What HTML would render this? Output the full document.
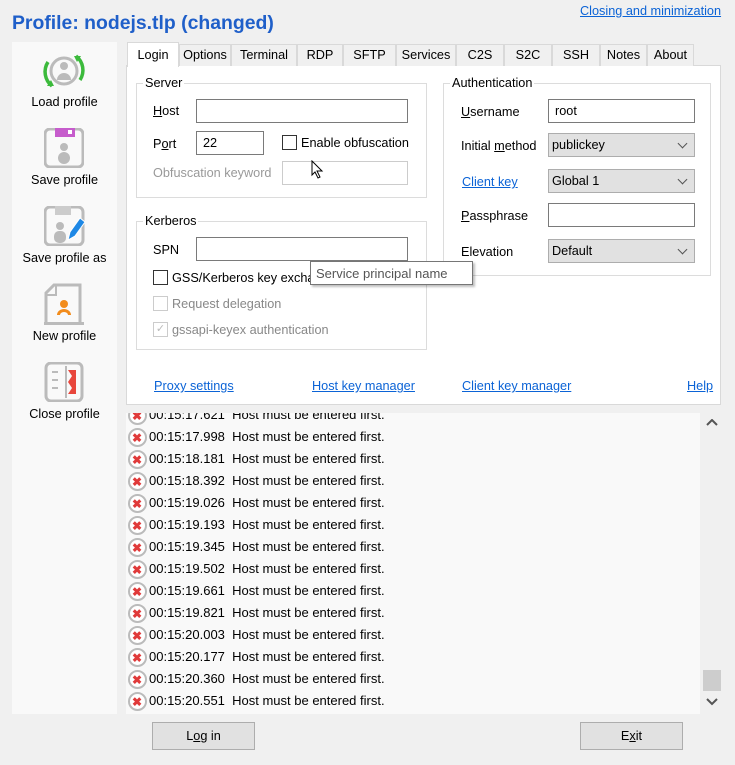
<!DOCTYPE html>
<html><head><meta charset="utf-8"><style>
*{box-sizing:border-box}
body{margin:0;width:735px;height:765px;background:#f0f0f0;font-family:"Liberation Sans",sans-serif;font-size:12.7px;color:#000;position:relative;overflow:hidden}
.a{position:absolute;white-space:nowrap}
.lnk{color:#0b63d6;text-decoration:underline}
.inp{position:absolute;background:#fff;border:1px solid #7a7a7a;height:24px;padding:4px 6px}
.dis{position:absolute;background:#fff;border:1px solid #ccc;height:24px}
.sel{position:absolute;background:#e1e1e1;border:1px solid #adadad;height:24px;padding:4px 3px}
.sel:after{content:"";position:absolute;right:8px;top:6px;width:6px;height:6px;border-right:1px solid #555;border-bottom:1px solid #555;transform:rotate(45deg)}
.grp{position:absolute;border:1px solid #dcdcdc}
.grp span{position:absolute;top:-8px;left:6px;background:#fff;padding:0 2px}
.cb{position:absolute;width:15px;height:15px;border:1px solid #333;background:#fff}
.tab{position:absolute;top:44px;height:22px;border:1px solid #d9d9d9;border-bottom:none;background:#f0f0f0;text-align:center;line-height:21px}
.row{position:absolute;left:128px;height:22px;line-height:22px;font-size:13px}
.ic{position:absolute;left:0;top:2px;width:19px;height:19px;border-radius:50%;border:2px solid #bbb;background:#fff}
.ic:before{content:"✖";position:absolute;left:2px;top:-3px;font-size:12px;color:#e03a3a;font-weight:bold}
.btn{position:absolute;top:722px;width:103px;height:28px;background:#e1e1e1;border:1px solid #adadad;text-align:center;line-height:26px}
.side{position:absolute;left:12px;width:105px;text-align:center}
</style></head><body>
<div class="a" style="left:12px;top:12px;font-size:19.4px;font-weight:bold;color:#1f5fc9">Profile: nodejs.tlp (changed)</div>
<div class="a lnk" style="left:580px;top:4px;font-size:12.7px">Closing and minimization</div>

<div class="a" style="left:12px;top:42px;width:105px;height:672px;background:#f9f9f9"></div>
<svg class="a" style="left:40px;top:52px" width="48" height="40" viewBox="0 0 48 40"><circle cx="24" cy="19" r="13" fill="none" stroke="#bbb" stroke-width="3"/><circle cx="24" cy="14" r="4" fill="#bbb"/><path d="M17 28 a7 7 0 0 1 14 0z" fill="#bbb"/><path d="M8 10 a18 18 0 0 0 4 24" fill="none" stroke="#3cba3c" stroke-width="3.5"/><path d="M40 28 a18 18 0 0 0 -4 -24" fill="none" stroke="#3cba3c" stroke-width="3.5"/><path d="M7 34 l7 0 l-3 -6z M41 4 l-7 0 l3 6z" fill="#3cba3c"/></svg>
<div class="side" style="top:95px">Load profile</div>
<svg class="a" style="left:44px;top:128px" width="40" height="40"><rect x="1" y="1" width="38" height="38" rx="5" fill="none" stroke="#bbb" stroke-width="3"/><rect x="11" y="0" width="20" height="9" fill="#c65ccc"/><rect x="24" y="2" width="4" height="4" fill="#fff"/><circle cx="20" cy="19" r="4" fill="#bbb"/><rect x="14" y="24" width="12" height="12" rx="6" fill="#bbb"/></svg>
<div class="side" style="top:173px">Save profile</div>
<svg class="a" style="left:44px;top:206px" width="42" height="40"><rect x="1" y="1" width="38" height="38" rx="5" fill="none" stroke="#bbb" stroke-width="3"/><rect x="11" y="0" width="16" height="9" fill="#ccc"/><circle cx="16" cy="20" r="4" fill="#bbb"/><rect x="10" y="25" width="12" height="12" rx="5" fill="#bbb"/><path d="M24 34 l2 -8 l10 -14 l5 4 l-10 14z" fill="#1e88e5" stroke="#fff"/></svg>
<div class="side" style="top:251px">Save profile as</div>
<svg class="a" style="left:44px;top:283px" width="40" height="42"><path d="M2 40 V10 L10 2 H36 V40" fill="none" stroke="#bbb" stroke-width="3"/><path d="M2 12 H12 V2" fill="none" stroke="#bbb" stroke-width="2"/><circle cx="20" cy="21" r="4" fill="#f28c1c"/><path d="M13 32 a7 6 0 0 1 14 0 h-3 a4 3 0 0 0 -8 0z" fill="#f28c1c"/><rect x="0" y="39" width="40" height="3" fill="#bbb"/></svg>
<div class="side" style="top:329px">New profile</div>
<svg class="a" style="left:44px;top:362px" width="40" height="40"><rect x="2" y="1" width="36" height="38" rx="5" fill="none" stroke="#bbb" stroke-width="3"/><path d="M8 10h6M8 18h6M8 26h6" stroke="#bbb" stroke-width="2"/><path d="M22 4 v32" stroke="#bbb" stroke-width="2"/><path d="M24 8 h8 v24 h-8 l4 -6 l-4 -6 l4 -6z" fill="#e8463c"/></svg>
<div class="side" style="top:407px">Close profile</div>

<div class="a" style="left:126px;top:65px;width:595px;height:340px;background:#fff;border:1px solid #d9d9d9"></div>
<div class="tab" style="left:179px;width:52px">Options</div>
<div class="tab" style="left:231px;width:66px">Terminal</div>
<div class="tab" style="left:297px;width:46px">RDP</div>
<div class="tab" style="left:343px;width:53px">SFTP</div>
<div class="tab" style="left:396px;width:60px">Services</div>
<div class="tab" style="left:456px;width:48px">C2S</div>
<div class="tab" style="left:504px;width:48px">S2C</div>
<div class="tab" style="left:552px;width:48px">SSH</div>
<div class="tab" style="left:600px;width:47px">Notes</div>
<div class="tab" style="left:647px;width:47px">About</div>
<div class="tab" style="left:127px;top:42px;width:52px;height:25px;background:#fff;line-height:24px">Login</div>

<div class="grp" style="left:136px;top:83px;width:291px;height:115px"><span>Server</span></div>
<div class="a" style="left:153px;top:104px"><u>H</u>ost</div>
<div class="inp" style="left:196px;top:99px;width:212px"></div>
<div class="a" style="left:153px;top:137px">P<u>o</u>rt</div>
<div class="inp" style="left:196px;top:131px;width:68px">22</div>
<div class="cb" style="left:282px;top:135px"></div>
<div class="a" style="left:301px;top:136px">Enable obfuscation</div>
<div class="a" style="left:153px;top:166px;color:#999">Obfuscation keyword</div>
<div class="dis" style="left:282px;top:161px;width:126px"></div>
<svg class="a" style="left:311px;top:160px" width="14" height="20"><path d="M1 1 L1 15 L4 12 L7 18 L9 17 L6 11 L11 11Z" fill="#fff" stroke="#000"/></svg>

<div class="grp" style="left:136px;top:221px;width:291px;height:129px"><span>Kerberos</span></div>
<div class="a" style="left:153px;top:243px">SPN</div>
<div class="inp" style="left:196px;top:237px;width:212px"></div>
<div class="cb" style="left:153px;top:270px"></div>
<div class="a" style="left:172px;top:271px">GSS/Kerberos key excha</div>
<div class="cb" style="left:153px;top:296px;border-color:#ccc"></div>
<div class="a" style="left:172px;top:297px;color:#888">Request delegation</div>
<div class="cb" style="left:153px;top:322px;border-color:#ccc;color:#bbb;font-size:11px;line-height:13px;text-align:center">✓</div>
<div class="a" style="left:172px;top:323px;color:#888">gssapi-keyex authentication</div>

<div class="grp" style="left:443px;top:83px;width:268px;height:193px"><span>Authentication</span></div>
<div class="a" style="left:461px;top:105px"><u>U</u>sername</div>
<div class="inp" style="left:548px;top:99px;width:147px">root</div>
<div class="a" style="left:461px;top:139px">Initial <u>m</u>ethod</div>
<div class="sel" style="left:548px;top:133px;width:147px">publickey</div>
<div class="a lnk" style="left:462px;top:175px">Client key</div>
<div class="sel" style="left:548px;top:169px;width:147px">Global 1</div>
<div class="a" style="left:461px;top:209px"><u>P</u>assphrase</div>
<div class="inp" style="left:548px;top:203px;width:147px"></div>
<div class="a" style="left:461px;top:245px">Elevation</div>
<div class="sel" style="left:548px;top:239px;width:147px">Default</div>

<div class="a" style="left:310px;top:261px;width:163px;height:24px;background:#fff;border:1px solid #767676;box-shadow:2px 2px 2px rgba(0,0,0,.25);padding:4px 5px;color:#555;font-size:13px">Service principal name</div>

<div class="a lnk" style="left:154px;top:379px">Proxy settings</div>
<div class="a lnk" style="left:312px;top:379px">Host key manager</div>
<div class="a lnk" style="left:462px;top:379px">Client key manager</div>
<div class="a lnk" style="left:687px;top:379px">Help</div>

<div class="a" style="left:126px;top:413px;width:596px;height:301px;background:#f9f9f9;overflow:hidden">
<div style="position:absolute;left:-126px;top:-413px;width:735px;height:765px">
<div class="row" style="top:404px"><div class="ic"></div><span style="margin-left:21px">00:15:17.621&nbsp;&nbsp;Host must be entered first.</span></div>
<div class="row" style="top:426px"><div class="ic"></div><span style="margin-left:21px">00:15:17.998&nbsp;&nbsp;Host must be entered first.</span></div>
<div class="row" style="top:448px"><div class="ic"></div><span style="margin-left:21px">00:15:18.181&nbsp;&nbsp;Host must be entered first.</span></div>
<div class="row" style="top:470px"><div class="ic"></div><span style="margin-left:21px">00:15:18.392&nbsp;&nbsp;Host must be entered first.</span></div>
<div class="row" style="top:492px"><div class="ic"></div><span style="margin-left:21px">00:15:19.026&nbsp;&nbsp;Host must be entered first.</span></div>
<div class="row" style="top:514px"><div class="ic"></div><span style="margin-left:21px">00:15:19.193&nbsp;&nbsp;Host must be entered first.</span></div>
<div class="row" style="top:536px"><div class="ic"></div><span style="margin-left:21px">00:15:19.345&nbsp;&nbsp;Host must be entered first.</span></div>
<div class="row" style="top:558px"><div class="ic"></div><span style="margin-left:21px">00:15:19.502&nbsp;&nbsp;Host must be entered first.</span></div>
<div class="row" style="top:580px"><div class="ic"></div><span style="margin-left:21px">00:15:19.661&nbsp;&nbsp;Host must be entered first.</span></div>
<div class="row" style="top:602px"><div class="ic"></div><span style="margin-left:21px">00:15:19.821&nbsp;&nbsp;Host must be entered first.</span></div>
<div class="row" style="top:624px"><div class="ic"></div><span style="margin-left:21px">00:15:20.003&nbsp;&nbsp;Host must be entered first.</span></div>
<div class="row" style="top:646px"><div class="ic"></div><span style="margin-left:21px">00:15:20.177&nbsp;&nbsp;Host must be entered first.</span></div>
<div class="row" style="top:668px"><div class="ic"></div><span style="margin-left:21px">00:15:20.360&nbsp;&nbsp;Host must be entered first.</span></div>
<div class="row" style="top:690px"><div class="ic"></div><span style="margin-left:21px">00:15:20.551&nbsp;&nbsp;Host must be entered first.</span></div>
</div>
<div style="position:absolute;left:574px;top:0;width:22px;height:301px;background:#f0f0f0"></div>
<div style="position:absolute;left:577px;top:257px;width:18px;height:21px;background:#cdcdcd"></div>
</div>
<svg class="a" style="left:706px;top:419px" width="12" height="8"><path d="M1 6 L6 1 L11 6" fill="none" stroke="#555" stroke-width="2"/></svg>
<svg class="a" style="left:706px;top:698px" width="12" height="8"><path d="M1 1 L6 6 L11 1" fill="none" stroke="#555" stroke-width="2"/></svg>

<div class="btn" style="left:152px">L<u>o</u>g in</div>
<div class="btn" style="left:580px">E<u>x</u>it</div>
</body></html>
